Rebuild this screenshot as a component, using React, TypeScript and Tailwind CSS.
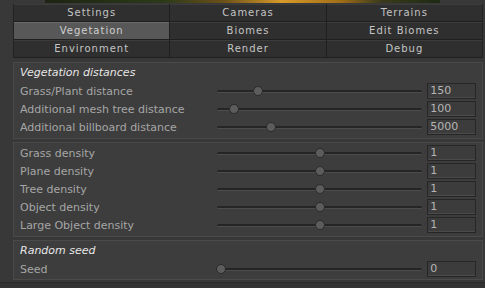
import React from "react";

const tabs = [
  ["Settings", "Cameras", "Terrains"],
  ["Vegetation", "Biomes", "Edit Biomes"],
  ["Environment", "Render", "Debug"],
];

type Row = { label: string; value: string; pos: number };

const distances: Row[] = [
  { label: "Grass/Plant distance", value: "150", pos: 41 },
  { label: "Additional mesh tree distance", value: "100", pos: 17 },
  { label: "Additional billboard distance", value: "5000", pos: 54 },
];

const densities: Row[] = [
  { label: "Grass density", value: "1", pos: 103 },
  { label: "Plane density", value: "1", pos: 103 },
  { label: "Tree density", value: "1", pos: 103 },
  { label: "Object density", value: "1", pos: 103 },
  { label: "Large Object density", value: "1", pos: 103 },
];

function SliderRow({ row }: { row: Row }) {
  return (
    <div className="flex items-center h-[18px] pl-[6px] pr-[6px]">
      <div className="w-[198px] text-[11px] text-[#a6a6a6] leading-none">{row.label}</div>
      <div className="relative w-[206px] h-[18px]">
        {/* track */}
        <div className="absolute left-0 right-0 top-[8px] h-[3px] rounded-full bg-[#252525] border-b border-[#4c4c4c]" />
        {/* thumb */}
        <div
          className="absolute top-[4px] w-[10px] h-[10px] rounded-full bg-[#5c5c5c] border border-[#2a2a2a]"
          style={{ left: row.pos - 5 }}
        />
      </div>
      <div className="ml-[5px] w-[49px] h-[16px] bg-[#3c3c3c] border border-[#262626] shadow-[inset_0_-1px_0_#4a4a4a] pl-[2px] text-[11px] leading-[14px] text-[#b4b4b4]">
        {row.value}
      </div>
    </div>
  );
}

export default function App() {
  return (
    <div
      className="w-[485px] h-[288px] bg-[#383838] overflow-hidden flex flex-col"
      style={{ fontFamily: '"DejaVu Sans", Verdana, sans-serif' }}
    >
      {/* header image strip */}
      <div className="h-[4px] flex">
        <div className="w-[45px]" />
        <div className="w-[395px] h-[3px] bg-[linear-gradient(90deg,#1d2412_0%,#2c3a1a_30%,#6a5018_45%,#d89a2a_60%,#a06d18_75%,#3a3b1c_85%,#1e2a14_100%)]" />
      </div>

      {/* tabs */}
      <div className="ml-[13px] mr-[2px] flex flex-col border-l border-r border-[#232323]">
        {tabs.map((row, r) => (
          <div key={r} className="flex h-[18px]">
            {row.map((t, c) => {
              const active = t === "Vegetation";
              return (
                <div
                  key={t}
                  className={
                    "flex-1 flex items-center justify-center text-[10px] tracking-[1px] border-b border-[#1f1f1f] " +
                    (c < 2 ? "border-r " : "") +
                    (active
                      ? "bg-[#585858] text-[#cfcfcf] shadow-[inset_0_1px_0_#6a6a6a]"
                      : "bg-[#2f2f2f] text-[#c4c4c4] shadow-[inset_0_1px_0_#3c3c3c]")
                  }
                >
                  {t}
                </div>
              );
            })}
          </div>
        ))}
      </div>

      {/* vegetation distances */}
      <div className="ml-[13px] mr-[2px] mt-[4px] pt-[1px] pb-[2px] bg-[#3d3d3d] border border-[#4a4a4a]">
        <div className="h-[18px] flex items-center pl-[6px] text-[11px] italic text-[#e6e6e6]">
          Vegetation distances
        </div>
        {distances.map((r) => (
          <SliderRow key={r.label} row={r} />
        ))}
      </div>

      {/* densities */}
      <div className="ml-[13px] mr-[2px] mt-[3px] pt-[1px] pb-[2px] bg-[#3d3d3d] border border-[#4a4a4a]">
        {densities.map((r) => (
          <SliderRow key={r.label} row={r} />
        ))}
      </div>

      {/* random seed */}
      <div className="ml-[13px] mr-[2px] mt-[3px] pt-[1px] pb-[1px] bg-[#3d3d3d] border border-[#4a4a4a]">
        <div className="h-[18px] flex items-center pl-[6px] text-[11px] italic text-[#e6e6e6]">
          Random seed
        </div>
        <SliderRow row={{ label: "Seed", value: "0", pos: 4 }} />
      </div>

      <div className="flex-1 mt-[2px] border-t border-[#2a2a2a] bg-[#333333]" />
    </div>
  );
}
